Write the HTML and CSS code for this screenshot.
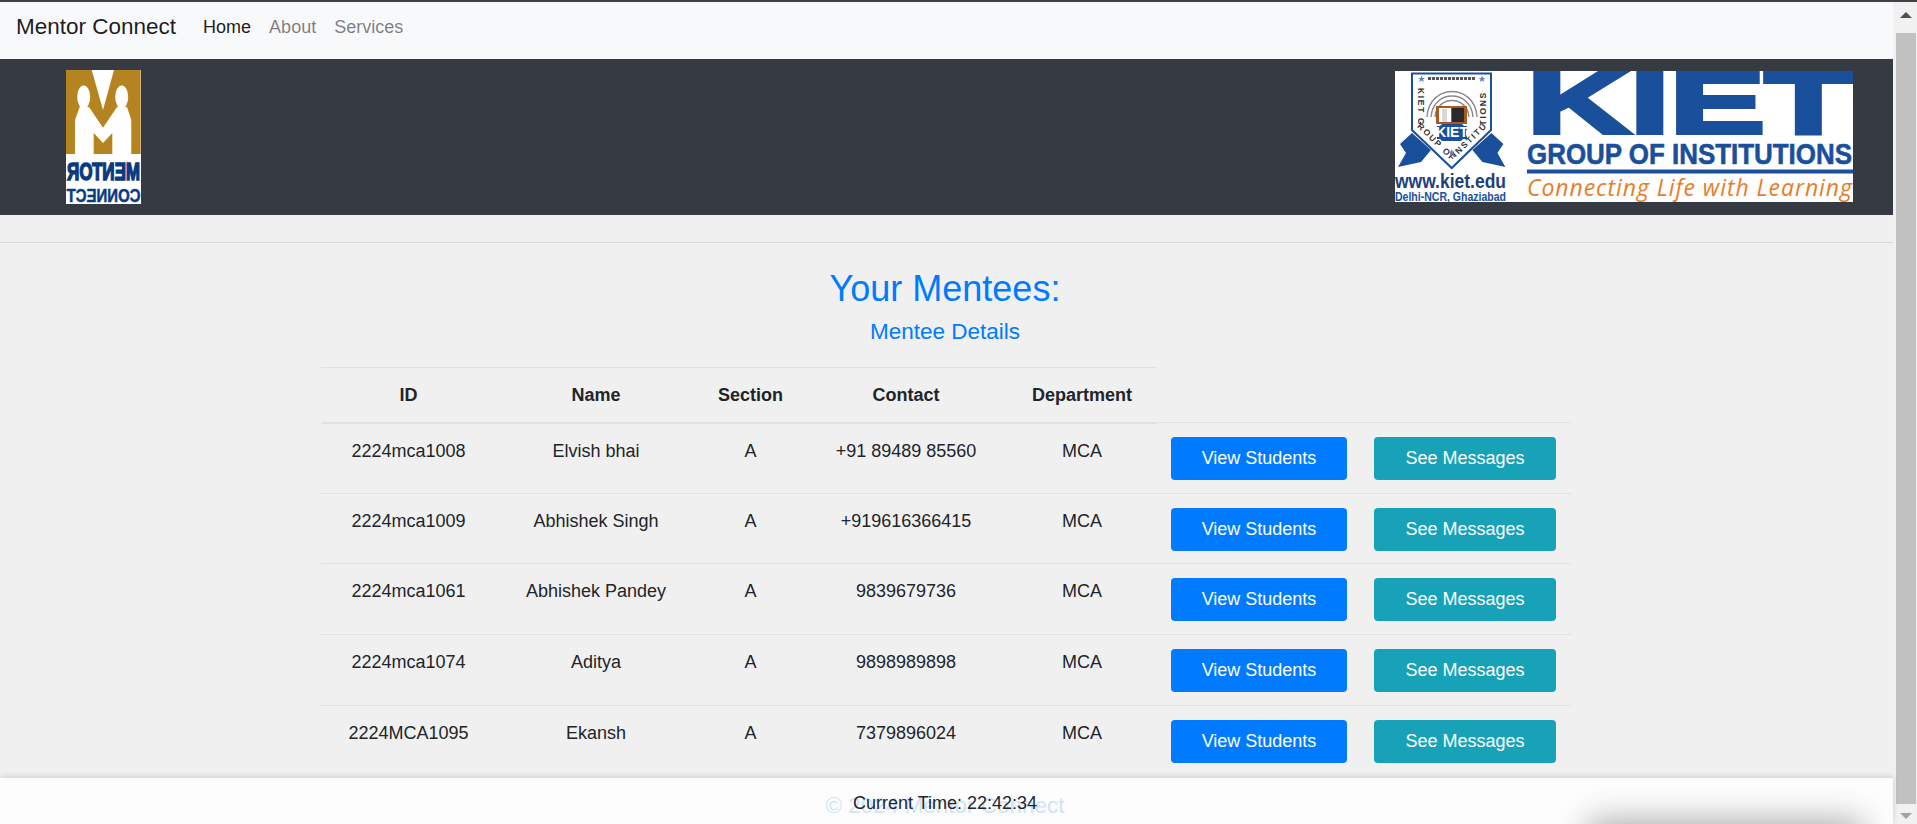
FILE: index.html
```html
<!doctype html>
<html lang="en">
<head>
<meta charset="utf-8">
<title>Mentor Connect</title>
<link rel="stylesheet" href="styles.css">
</head>
<body>

<div class="topline"></div>
<div class="window">
  <div class="page">
    <nav class="navbar">
      <a class="brand" href="#">Mentor Connect</a>
      <a class="nav-link active" href="#">Home</a>
      <a class="nav-link" href="#">About</a>
      <a class="nav-link" href="#">Services</a>
    </nav>

    <header class="banner">
      <svg class="logo-mentor" viewBox="0 0 75 134" role="img" aria-label="Mentor Connect logo">
        <rect width="75" height="134" fill="#fff"/>
        <rect width="74.6" height="84" fill="#b58320"/>
        <path d="M25.7 0H48L37 40Z" fill="#fff"/>
        <ellipse cx="17.7" cy="27" rx="6.5" ry="11.5" fill="#fff"/>
        <ellipse cx="55.7" cy="27" rx="6.5" ry="11.5" fill="#fff"/>
        <path d="M13.7 37 9 50V84H27.7V63L37 73l9.3-10V84H65.3V50L61 37H51L37 57.7 23 37Z" fill="#fff"/>
        <g class="mirror" transform="translate(75 0) scale(-1 1)">
          <text class="logo-mentor-big" x="1" y="110" textLength="73" lengthAdjust="spacingAndGlyphs">MENTOR</text>
          <text class="logo-mentor-small" x="0.5" y="132" textLength="74" lengthAdjust="spacingAndGlyphs">CONNECT</text>
        </g>
      </svg>

      <svg class="logo-kiet" viewBox="0 0 458 131" role="img" aria-label="KIET Group of Institutions logo">
        <rect width="458" height="131" fill="#fff"/>
        <!-- crest -->
        <path d="M17 62 5 73l6 9-8 14 23-5 10-12ZM96.400 62l12 11-6 9 8 14-23-5-10-12Z" fill="#1a4f9c"/>
        <path d="M17 2.500H96V59L56.700 97 17 59Z" fill="#fff" stroke="#1a4f9c" stroke-width="2"/>
        <path d="M33 7.500H80" class="crest-motto"/>
        <path d="M26.500 4.500l1 2.400 2.500.1-2 1.500.8 2.500-2.300-1.500-2.200 1.500.8-2.500-2-1.500 2.500-.1ZM87 4.500l1 2.400 2.500.1-2 1.500.8 2.500-2.300-1.500-2.200 1.500.8-2.500-2-1.500 2.500-.1Z" fill="#5f86c0"/>
        <path d="M32 46C34 12 80 12 82 46" class="crest-arch"/>
        <path d="M36 46C38 18 76 18 78 46" class="crest-arch"/>
        <path d="M40 46C42 24 72 24 74 46" class="crest-arch"/>
        <rect x="41" y="35" width="31" height="18" fill="#a85a20"/>
        <rect x="44" y="37" width="12" height="14" fill="#fff"/>
        <rect x="47" y="38" width="5" height="13" fill="#d8d8d8"/>
        <rect x="57" y="37" width="12" height="14" fill="#2a2a2a"/>
        <path d="M42 55h3l2-2h20l2 2h3v3l-1 2v4l1 2v2h-4l-2 2H47l-2-2h-3v-2l1-2v-4l-1-2Z" fill="#1a4f9c"/>
        <text class="crest-gear" x="57" y="66" text-anchor="middle">KIET</text>
        <path id="crestEdge" d="M23 17V57L56.700 90 91 57V15" fill="none"/>
        <text class="crest-ring"><textPath href="#crestEdge" textLength="170" startOffset="0">KIET GROUP OF INSTITUTIONS</textPath></text>
        <path d="M56.700 78l1 2.400 2.500.1-2 1.500.8 2.500-2.300-1.500-2.200 1.500.8-2.500-2-1.500 2.500-.1Z" fill="#5f86c0"/>
        <text class="crest-url" x="0" y="117" textLength="111" lengthAdjust="spacingAndGlyphs">www.kiet.edu</text>
        <text class="crest-place" x="0" y="130" textLength="111" lengthAdjust="spacingAndGlyphs">Delhi-NCR, Ghaziabad</text>
        <!-- wordmark -->
        <text class="kiet-word" x="132" y="62" textLength="325" lengthAdjust="spacingAndGlyphs">KIET</text>
        <text class="kiet-group" x="132" y="93" textLength="325" lengthAdjust="spacingAndGlyphs">GROUP OF INSTITUTIONS</text>
        <rect x="132" y="98.500" width="326" height="4" fill="#1a4f9c"/>
        <text class="kiet-tag" x="132" y="125" textLength="325" lengthAdjust="spacing">Connecting Life with Learning</text>
      </svg>
    </header>

    <hr class="rule">

    <main class="content">
      <h2 class="title">Your Mentees:</h2>
      <h4 class="subtitle">Mentee Details</h4>

      <table class="mentees">
        <thead>
          <tr>
            <th class="col-id">ID</th>
            <th class="col-name">Name</th>
            <th class="col-section">Section</th>
            <th class="col-contact">Contact</th>
            <th class="col-dept">Department</th>
          </tr>
        </thead>
        <tbody>
          <tr>
            <td>2224mca1008</td><td>Elvish bhai</td><td>A</td><td>+91 89489 85560</td><td>MCA</td>
            <td class="col-view"><a class="btn btn-primary" href="#">View Students</a></td>
            <td class="col-msg"><a class="btn btn-info" href="#">See Messages</a></td>
          </tr>
          <tr>
            <td>2224mca1009</td><td>Abhishek Singh</td><td>A</td><td>+919616366415</td><td>MCA</td>
            <td class="col-view"><a class="btn btn-primary" href="#">View Students</a></td>
            <td class="col-msg"><a class="btn btn-info" href="#">See Messages</a></td>
          </tr>
          <tr>
            <td>2224mca1061</td><td>Abhishek Pandey</td><td>A</td><td>9839679736</td><td>MCA</td>
            <td class="col-view"><a class="btn btn-primary" href="#">View Students</a></td>
            <td class="col-msg"><a class="btn btn-info" href="#">See Messages</a></td>
          </tr>
          <tr>
            <td>2224mca1074</td><td>Aditya</td><td>A</td><td>9898989898</td><td>MCA</td>
            <td class="col-view"><a class="btn btn-primary" href="#">View Students</a></td>
            <td class="col-msg"><a class="btn btn-info" href="#">See Messages</a></td>
          </tr>
          <tr>
            <td>2224MCA1095</td><td>Ekansh</td><td>A</td><td>7379896024</td><td>MCA</td>
            <td class="col-view"><a class="btn btn-primary" href="#">View Students</a></td>
            <td class="col-msg"><a class="btn btn-info" href="#">See Messages</a></td>
          </tr>
        </tbody>
      </table>
    </main>

    <footer class="footer">
      <p class="copyright">© 2024 Mentor Connect</p>
      <p class="clock">Current Time: 22:42:34</p>
      <div class="footer-blob"></div>
    </footer>
  </div>

  <aside class="scrollbar">
    <span class="arrow arrow-up"></span>
    <span class="thumb"></span>
    <span class="arrow arrow-down"></span>
  </aside>
</div>

</body>
</html>
```

FILE: styles.css
```css
* {
  box-sizing: border-box;
}
html, body {
  height: 100%;
}
body {
  margin: 0;
  font: 18px/1.5 "Liberation Sans", Arial, sans-serif;
  color: #212529;
  background: #f0f0f0;
  overflow: hidden;
}
.topline {
  height: 2px;
  background: #3d4349;
}
.window {
  display: flex;
  height: 822px;
}
.page {
  flex: 1;
  min-width: 0;
  display: flex;
  flex-direction: column;
}

/* navbar */
.navbar {
  height: 57px;
  flex-shrink: 0;
  display: flex;
  align-items: center;
  padding: 0 0 7px 16px;
  background: #f8f9fa;
}
.brand {
  font-size: 22.5px;
  color: rgba(0, 0, 0, 0.9);
  text-decoration: none;
  margin-right: 18px;
}
.nav-link {
  padding: 0 9px;
  color: rgba(0, 0, 0, 0.5);
  text-decoration: none;
}
.nav-link.active {
  color: rgba(0, 0, 0, 0.9);
}

/* logos */
.banner {
  height: 156px;
  flex-shrink: 0;
  display: flex;
  justify-content: space-between;
  align-items: center;
  padding: 0 40px 0 66px;
  background: #363a42;
}
.logo-mentor {
  width: 75px;
  height: 134px;
}
.logo-kiet {
  width: 458px;
  height: 131px;
  margin-top: -1px;
}
.logo-mentor-big {
  font: 700 23px "Liberation Sans", sans-serif;
  fill: #0b3a80;
  stroke: #0b3a80;
  stroke-width: 1.5;
}
.logo-mentor-small {
  font: 700 18px "Liberation Sans", sans-serif;
  fill: #0b3a80;
  stroke: #0b3a80;
  stroke-width: 0.5;
}
.crest-motto {
  stroke: #555;
  stroke-width: 3;
  stroke-dasharray: 3 1;
  fill: none;
}
.crest-arch {
  fill: none;
  stroke: #8a8a8a;
  stroke-width: 1.4;
}
.crest-gear {
  font: 700 14px "Liberation Sans", sans-serif;
  fill: #fff;
}
.crest-ring {
  font: 700 8.5px "Liberation Sans", sans-serif;
  fill: #333;
}
.crest-url {
  font: 700 20px "Liberation Sans", sans-serif;
  fill: #1d3f80;
}
.crest-place {
  font: 700 12px "Liberation Sans", sans-serif;
  fill: #1a4f9c;
}
.kiet-word {
  font: 700 89px "Liberation Sans", sans-serif;
  fill: #1a4f9c;
  stroke: #1a4f9c;
  stroke-width: 4;
}
.kiet-group {
  font: 700 30px "Liberation Sans", sans-serif;
  fill: #1a4f9c;
  stroke: #1a4f9c;
  stroke-width: 0.6;
}
.kiet-tag {
  font: italic 400 23px "Open Sans", sans-serif;
  fill: #e87d27;
}

.rule {
  flex-shrink: 0;
  margin: 27px 0 0;
  border: 0;
  border-top: 1px solid #dadada;
}

/* mentee table */
.content {
  flex: 1;
  min-height: 0;
  overflow: hidden;
  text-align: center;
  padding: 24px 3px 0 0;
}
.title {
  margin: 0 0 8px;
  font-size: 36px;
  font-weight: 400;
  line-height: 1.2;
  color: #007bff;
}
.subtitle {
  margin: 0 0 22px;
  font-size: 22.5px;
  font-weight: 400;
  line-height: 1.2;
  color: #007bff;
}
.mentees {
  width: 1250px;
  margin: 0 0 0 321px;
  table-layout: fixed;
  border-collapse: collapse;
}
.mentees th {
  height: 55px;
  padding: 1px 12px 0;
  font-weight: 700;
  border-top: 1px solid #dee2e6;
  border-bottom: 2px solid #dee2e6;
}
.mentees td {
  height: 70.6px;
  padding: 14px 12px 12px;
  vertical-align: top;
  border-top: 1px solid #dee2e6;
}
.col-id { width: 175px; }
.col-name { width: 200px; }
.col-section { width: 109px; }
.col-contact { width: 202px; }
.col-dept { width: 150px; }
.mentees td.col-view {
  padding: 14px 17px 12px 14px;
}
.mentees td.col-msg {
  padding: 14px 15px 12px 10px;
}
.btn {
  display: block;
  height: 43px;
  line-height: 41px;
  border: 1px solid transparent;
  border-radius: 4px;
  color: #fff;
  text-decoration: none;
}
.btn-primary {
  background: #007bff;
}
.btn-info {
  background: #17a2b8;
}

/* footer */
.footer {
  position: relative;
  height: 46px;
  flex-shrink: 0;
  overflow: hidden;
  background: #fdfdfd;
  box-shadow: 0 -1px 6px rgba(0, 0, 0, 0.15);
  text-align: center;
}
.copyright {
  margin: 10px 3px 0 0;
  font-size: 22.5px;
  line-height: 36px;
  color: #cfe3fb;
}
.clock {
  position: absolute;
  left: 0;
  right: 3px;
  top: 12px;
  margin: 0;
  font-size: 18px;
  color: #212529;
}
.footer-blob {
  position: absolute;
  left: 1600px;
  bottom: -28px;
  width: 250px;
  height: 20px;
  box-shadow: 0 0 32px 12px rgba(0, 0, 0, 0.32);
}

/* fake window scrollbar */
.scrollbar {
  width: 24px;
  flex-shrink: 0;
  display: flex;
  flex-direction: column;
  align-items: center;
  background: #f1f1f1;
  padding: 10px 1px 5px 3px;
}
.arrow {
  width: 0;
  height: 0;
  border-left: 6px solid transparent;
  border-right: 6px solid transparent;
}
.arrow-up {
  border-bottom: 6px solid #505050;
}
.arrow-down {
  border-top: 6px solid #a3a3a3;
}
.thumb {
  width: 100%;
  height: 771px;
  margin: 15px 0 9px;
  background: #c1c1c1;
}
```
